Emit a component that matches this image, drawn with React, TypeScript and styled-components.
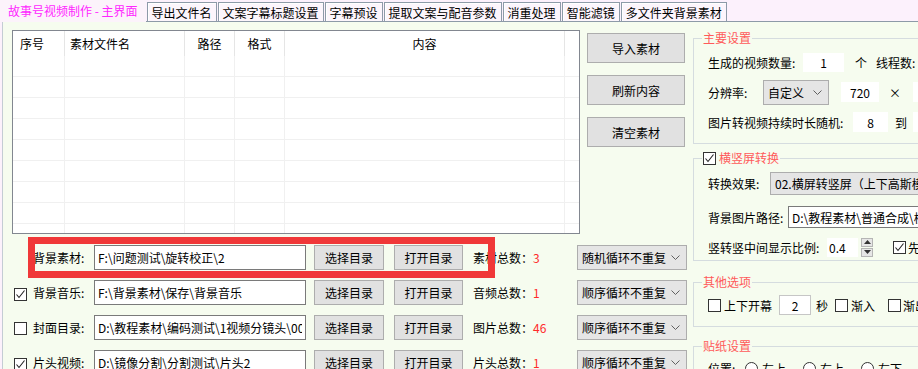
import styled, { createGlobalStyle, css } from "styled-components";

const FONT = `"Noto Sans CJK SC", "Microsoft YaHei", "Noto Sans", sans-serif`;

const GlobalStyle = createGlobalStyle`
  html, body {
    margin: 0;
    padding: 0;
    background: #f6fcef;
  }
  #root {
    width: 918px;
    height: 369px;
    overflow: hidden;
  }
`;

const tabs = ["导出文件名", "文案字幕标题设置", "字幕预设", "提取文案与配音参数", "消重处理", "智能滤镜", "多文件夹背景素材"];

const columns = [
  { title: "序号", center: false, pl: 7 },
  { title: "素材文件名", center: false, pl: 5 },
  { title: "路径", center: true, pl: 0 },
  { title: "格式", center: true, pl: 0 },
  { title: "内容", center: true, pl: 0 },
  { title: "", center: false, pl: 0 },
];

const fileRows = [
  { label: "背景素材:", check: null, path: "F:\\问题测试\\旋转校正\\2", count: "素材总数：", num: "3", mode: "随机循环不重复" },
  { label: "背景音乐:", check: true, path: "F:\\背景素材\\保存\\背景音乐", count: "音频总数：", num: "1", mode: "顺序循环不重复" },
  { label: "封面目录:", check: false, path: "D:\\教程素材\\编码测试\\1视频分镜头\\00", count: "图片总数：", num: "46", mode: "顺序循环不重复" },
  { label: "片头视频:", check: true, path: "D:\\镜像分割\\分割测试\\片头2", count: "片头总数：", num: "1", mode: "顺序循环不重复" },
];

// 勾选框
function CheckBox({ checked, ml }: { checked?: boolean; ml?: number }) {
  return (
    <Box $ml={ml}>
      {checked && (
        <svg width="11" height="11" viewBox="0 0 11 11">
          <polyline points="1.5,5.5 4,8.5 9.5,1.5" fill="none" stroke="#222" strokeWidth="1.1" />
        </svg>
      )}
    </Box>
  );
}

function Chevron() {
  return (
    <svg width="9" height="5" viewBox="0 0 9 5">
      <polyline points="0.5,0.5 4.5,4.5 8.5,0.5" fill="none" stroke="#606060" strokeWidth="1" />
    </svg>
  );
}

function Combo({ text, w, h, ml }: { text: string; w: number; h: number; ml?: number }) {
  return (
    <ComboBox $w={w} $h={h} $ml={ml}>
      <span>{text}</span>
      <Chevron />
    </ComboBox>
  );
}

const App = () => {
  return (
    <>
      <GlobalStyle />
      <Window>
        <TabStrip>
          <Tab $active>故事号视频制作 - 主界面</Tab>
          {tabs.map((t) => (
            <Tab key={t}>{t}</Tab>
          ))}
        </TabStrip>
        <Panel>
          <LeftCol>
            <TopArea>
              <ListView>
                <GridRow $head>
                  {columns.map((c, i) => (
                    <Cell key={i} $head $center={c.center} $pl={c.pl}>
                      {c.title}
                    </Cell>
                  ))}
                </GridRow>
                {Array.from({ length: 9 }).map((_, r) => (
                  <GridRow key={r}>
                    {columns.map((_, i) => (
                      <Cell key={i} />
                    ))}
                  </GridRow>
                ))}
              </ListView>
              <ButtonCol>
                <PushButton $w={98} $h={30}>导入素材</PushButton>
                <PushButton $w={98} $h={30}>刷新内容</PushButton>
                <PushButton $w={98} $h={30}>清空素材</PushButton>
              </ButtonCol>
            </TopArea>
            <FileRows>
              {fileRows.map((f) => (
                <FileRow key={f.label}>
                  <CheckSlot>{f.check !== null && <CheckBox checked={f.check} />}</CheckSlot>
                  <FieldLabel>{f.label}</FieldLabel>
                  <PathInput readOnly value={f.path} />
                  <PushButton $w={70} $h={25} $ml={8}>选择目录</PushButton>
                  <PushButton $w={69} $h={25} $ml={10}>打开目录</PushButton>
                  <Count>
                    {f.count}
                    <RedNum>{f.num}</RedNum>
                  </Count>
                  <Combo text={f.mode} w={110} h={25} />
                </FileRow>
              ))}
            </FileRows>
            <Highlight />
          </LeftCol>

          <RightCol>
            <Group $h={114}>
              <Legend>主要设置</Legend>
              <GroupBody $pt={1}>
                <GroupRow $h={30}>
                  <Text $w={95}>生成的视频数量:</Text>
                  <NumBox readOnly value="1" $w={41} $h={19} />
                  <Text $ml={11}>个</Text>
                  <Text $ml={9}>线程数:</Text>
                </GroupRow>
                <GroupRow $h={30}>
                  <Text $w={55}>分辨率:</Text>
                  <Combo text="自定义" w={66} h={25} />
                  <NumBox readOnly value="720" $w={38} $h={20} $ml={12} />
                  <Text $ml={10} $w={24}>×</Text>
                  <NumBox readOnly value="576" $w={38} $h={20} />
                </GroupRow>
                <GroupRow $h={30}>
                  <Text $w={145}>图片转视频持续时长随机:</Text>
                  <NumBox readOnly value="8" $w={35} $h={20} />
                  <Text $ml={7}>到</Text>
                  <NumBox readOnly value="15" $w={35} $h={20} $ml={6} />
                </GroupRow>
              </GroupBody>
            </Group>

            <Group $h={111} $mt={6}>
              <Legend>
                <CheckBox checked />
                横竖屏转换
              </Legend>
              <GroupBody>
                <GroupRow $h={34}>
                  <Text $w={62}>转换效果:</Text>
                  <Combo text="02.横屏转竖屏（上下高斯模糊）" w={220} h={23} />
                </GroupRow>
                <GroupRow $h={34}>
                  <Text $w={80}>背景图片路径:</Text>
                  <Edit readOnly value="D:\教程素材\普通合成\横屏背景" $w={200} $h={22} />
                </GroupRow>
                <GroupRow $h={26}>
                  <Text $w={119}>竖转竖中间显示比例:</Text>
                  <NumBox readOnly value="0.4" $w={31} $h={19} $left />
                  <Spin>
                    <SpinBtn>
                      <svg width="7" height="4" viewBox="0 0 7 4">
                        <polygon points="0,4 3.5,0 7,4" fill="#333" />
                      </svg>
                    </SpinBtn>
                    <SpinBtn>
                      <svg width="7" height="4" viewBox="0 0 7 4">
                        <polygon points="0,0 3.5,4 7,0" fill="#333" />
                      </svg>
                    </SpinBtn>
                  </Spin>
                  <CheckBox checked ml={20} />
                  <Text $ml={2}>先</Text>
                </GroupRow>
              </GroupBody>
            </Group>

            <Group $h={53} $mt={13}>
              <Legend>其他选项</Legend>
              <GroupBody>
                <GroupRow $h={30}>
                  <CheckBox />
                  <Text $ml={3}>上下开幕</Text>
                  <NumBox readOnly value="2" $w={32} $h={20} $ml={7} $framed />
                  <Text $ml={5}>秒</Text>
                  <CheckBox ml={7} />
                  <Text $ml={3}>渐入</Text>
                  <CheckBox ml={13} />
                  <Text $ml={2}>渐出</Text>
                </GroupRow>
              </GroupBody>
            </Group>

            <Group $h={60} $mt={11}>
              <Legend>贴纸设置</Legend>
              <GroupBody>
                <GroupRow $h={28}>
                  <Text $w={37}>位置:</Text>
                  <Radio />
                  <Text $ml={4}>左上</Text>
                  <Radio $ml={17} />
                  <Text $ml={4}>右上</Text>
                  <Radio $ml={17} />
                  <Text $ml={4}>左下</Text>
                </GroupRow>
              </GroupBody>
            </Group>
          </RightCol>
        </Panel>
      </Window>
    </>
  );
};

export default App;

const Window = styled.div`
  width: 918px;
  height: 369px;
  display: flex;
  flex-direction: column;
  background: #fcf1fc;
  font-family: ${FONT};
  font-size: 12px;
  color: #000;
  overflow: hidden;
`;

const TabStrip = styled.div`
  display: flex;
  align-items: flex-end;
  gap: 1px;
  height: 21px;
  flex-shrink: 0;
  border-bottom: 1px solid #8d9aa8;
`;

const Tab = styled.div<{ $active?: boolean }>`
  box-sizing: border-box;
  display: flex;
  align-items: center;
  white-space: nowrap;
  flex-shrink: 0;
  ${(p) =>
    p.$active
      ? css`
          position: relative;
          height: 22px;
          margin-bottom: -1px;
          padding: 0 8px 2px;
          color: #ff26ff;
          background: #fcf3fb;
        `
      : css`
          height: 19px;
          padding: 1px 4px 0;
          border: 1px solid #8d9aa8;
          border-bottom: none;
          background: #fcf5fc;
          box-shadow: inset 1px 1px 0 #fff;
        `}
`;

const Panel = styled.div`
  flex: 1;
  display: flex;
  min-height: 0;
  margin-left: 2px;
  border-left: 1px solid #c4ccd4;
  background: #f6fcef;
`;

const LeftCol = styled.div`
  position: relative;
  width: 690px;
  flex-shrink: 0;
  box-sizing: border-box;
  padding: 8px 0 0 9px;
`;

const TopArea = styled.div`
  display: flex;
  height: 204px;
`;

const ListView = styled.div`
  width: 568px;
  height: 204px;
  box-sizing: border-box;
  border: 1px solid #828790;
  background: #fff;
  overflow: hidden;
`;

const GridRow = styled.div<{ $head?: boolean }>`
  display: grid;
  grid-template-columns: 52px 120px 50px 50px 280px 1fr;
  box-sizing: border-box;
  height: ${(p) => (p.$head ? "25px" : "21px")};
  border-bottom: ${(p) => (p.$head ? "none" : "1px solid #f0f0f0")};
`;

const Cell = styled.div<{ $head?: boolean; $center?: boolean; $pl?: number }>`
  display: flex;
  align-items: center;
  justify-content: ${(p) => (p.$center ? "center" : "flex-start")};
  padding-left: ${(p) => p.$pl ?? 0}px;
  border-right: 1px solid ${(p) => (p.$head ? "#e5e5e5" : "#f0f0f0")};
  white-space: nowrap;
  &:last-child {
    border-right: none;
  }
`;

const ButtonCol = styled.div`
  display: flex;
  flex-direction: column;
  gap: 12px;
  margin-left: 7px;
  padding-top: 3px;
`;

const PushButton = styled.button<{ $w: number; $h: number; $ml?: number }>`
  box-sizing: border-box;
  width: ${(p) => p.$w}px;
  height: ${(p) => p.$h}px;
  margin: 0 0 0 ${(p) => p.$ml ?? 0}px;
  padding: 0;
  flex-shrink: 0;
  background: #e1e1e1;
  border: 1px solid #adadad;
  border-radius: 0;
  font: inherit;
  color: #000;
`;

const FileRows = styled.div`
  margin-top: 6px;
  margin-left: -8px;
`;

const FileRow = styled.div`
  display: flex;
  align-items: center;
  height: 35px;
  padding-left: 10px;
`;

const CheckSlot = styled.div`
  width: 13px;
  height: 13px;
  margin-right: 6px;
  flex-shrink: 0;
`;

const Box = styled.span<{ $ml?: number }>`
  box-sizing: border-box;
  display: inline-flex;
  align-items: center;
  justify-content: center;
  width: 13px;
  height: 13px;
  margin-left: ${(p) => p.$ml ?? 0}px;
  flex-shrink: 0;
  border: 1px solid #333;
  background: #fff;
`;

const FieldLabel = styled.span`
  width: 61px;
  flex-shrink: 0;
  white-space: nowrap;
`;

const PathInput = styled.input`
  box-sizing: border-box;
  width: 212px;
  height: 25px;
  margin: 0;
  padding: 0 3px;
  flex-shrink: 0;
  border: 1px solid #7a7a7a;
  background: #fff;
  font: inherit;
  color: #000;
  outline: none;
`;

const Count = styled.span`
  width: 104px;
  margin-left: 10px;
  flex-shrink: 0;
  white-space: nowrap;
`;

const RedNum = styled.span`
  color: #ff2a2a;
`;

const ComboBox = styled.div<{ $w: number; $h: number; $ml?: number }>`
  box-sizing: border-box;
  display: flex;
  align-items: center;
  justify-content: space-between;
  width: ${(p) => p.$w}px;
  height: ${(p) => p.$h}px;
  margin-left: ${(p) => p.$ml ?? 0}px;
  padding: 0 6px 0 4px;
  flex-shrink: 0;
  background: #e5e5e5;
  border: 1px solid #adadad;
  white-space: nowrap;
  overflow: hidden;
`;

const Highlight = styled.div`
  position: absolute;
  left: 25px;
  top: 215px;
  width: 467px;
  height: 41px;
  box-sizing: border-box;
  border: 7px solid #f03838;
  pointer-events: none;
`;

const RightCol = styled.div`
  flex: 1;
  min-width: 0;
  display: flex;
  flex-direction: column;
  padding-top: 8px;
`;

const Group = styled.fieldset<{ $h: number; $mt?: number }>`
  box-sizing: border-box;
  width: 260px;
  height: ${(p) => p.$h}px;
  min-width: 0;
  margin: ${(p) => p.$mt ?? 0}px 0 0 0;
  padding: 0;
  flex-shrink: 0;
  border: 1px solid #d5dcdf;
`;

const Legend = styled.legend`
  display: flex;
  align-items: center;
  gap: 3px;
  margin-left: 8px;
  padding: 0 1px;
  line-height: 16px;
  color: #ff5a5a;
`;

const GroupBody = styled.div<{ $pt?: number }>`
  padding: ${(p) => p.$pt ?? 0}px 0 0 14px;
`;

const GroupRow = styled.div<{ $h: number }>`
  display: flex;
  align-items: center;
  height: ${(p) => p.$h}px;
  white-space: nowrap;
`;

const Text = styled.span<{ $w?: number; $ml?: number }>`
  ${(p) => (p.$w ? `width: ${p.$w}px;` : "")}
  margin-left: ${(p) => p.$ml ?? 0}px;
  flex-shrink: 0;
  white-space: nowrap;
`;

const NumBox = styled.input<{ $w: number; $h: number; $ml?: number; $framed?: boolean; $left?: boolean }>`
  box-sizing: border-box;
  width: ${(p) => p.$w}px;
  height: ${(p) => p.$h}px;
  margin: 0 0 0 ${(p) => p.$ml ?? 0}px;
  padding: 0 1px;
  flex-shrink: 0;
  border: 1px solid ${(p) => (p.$framed ? "#c6c6c6" : "#fff")};
  background: #fff;
  font: inherit;
  color: #000;
  text-align: ${(p) => (p.$left ? "left" : "center")};
  outline: none;
`;

const Edit = styled.input<{ $w: number; $h: number }>`
  box-sizing: border-box;
  width: ${(p) => p.$w}px;
  height: ${(p) => p.$h}px;
  margin: 0;
  padding: 0 3px;
  flex-shrink: 0;
  border: 1px solid #7a7a7a;
  background: #fff;
  font: inherit;
  color: #000;
  outline: none;
`;

const Spin = styled.div`
  display: flex;
  flex-direction: column;
  gap: 1px;
  width: 12px;
  height: 19px;
  margin-left: 3px;
  flex-shrink: 0;
`;

const SpinBtn = styled.div`
  flex: 1;
  display: flex;
  align-items: center;
  justify-content: center;
  background: #e6e6e6;
  border: 1px solid #b5b5b5;
`;

const Radio = styled.span<{ $ml?: number }>`
  box-sizing: border-box;
  width: 13px;
  height: 13px;
  margin-left: ${(p) => p.$ml ?? 0}px;
  flex-shrink: 0;
  border: 1px solid #333;
  border-radius: 50%;
  background: #fff;
`;
